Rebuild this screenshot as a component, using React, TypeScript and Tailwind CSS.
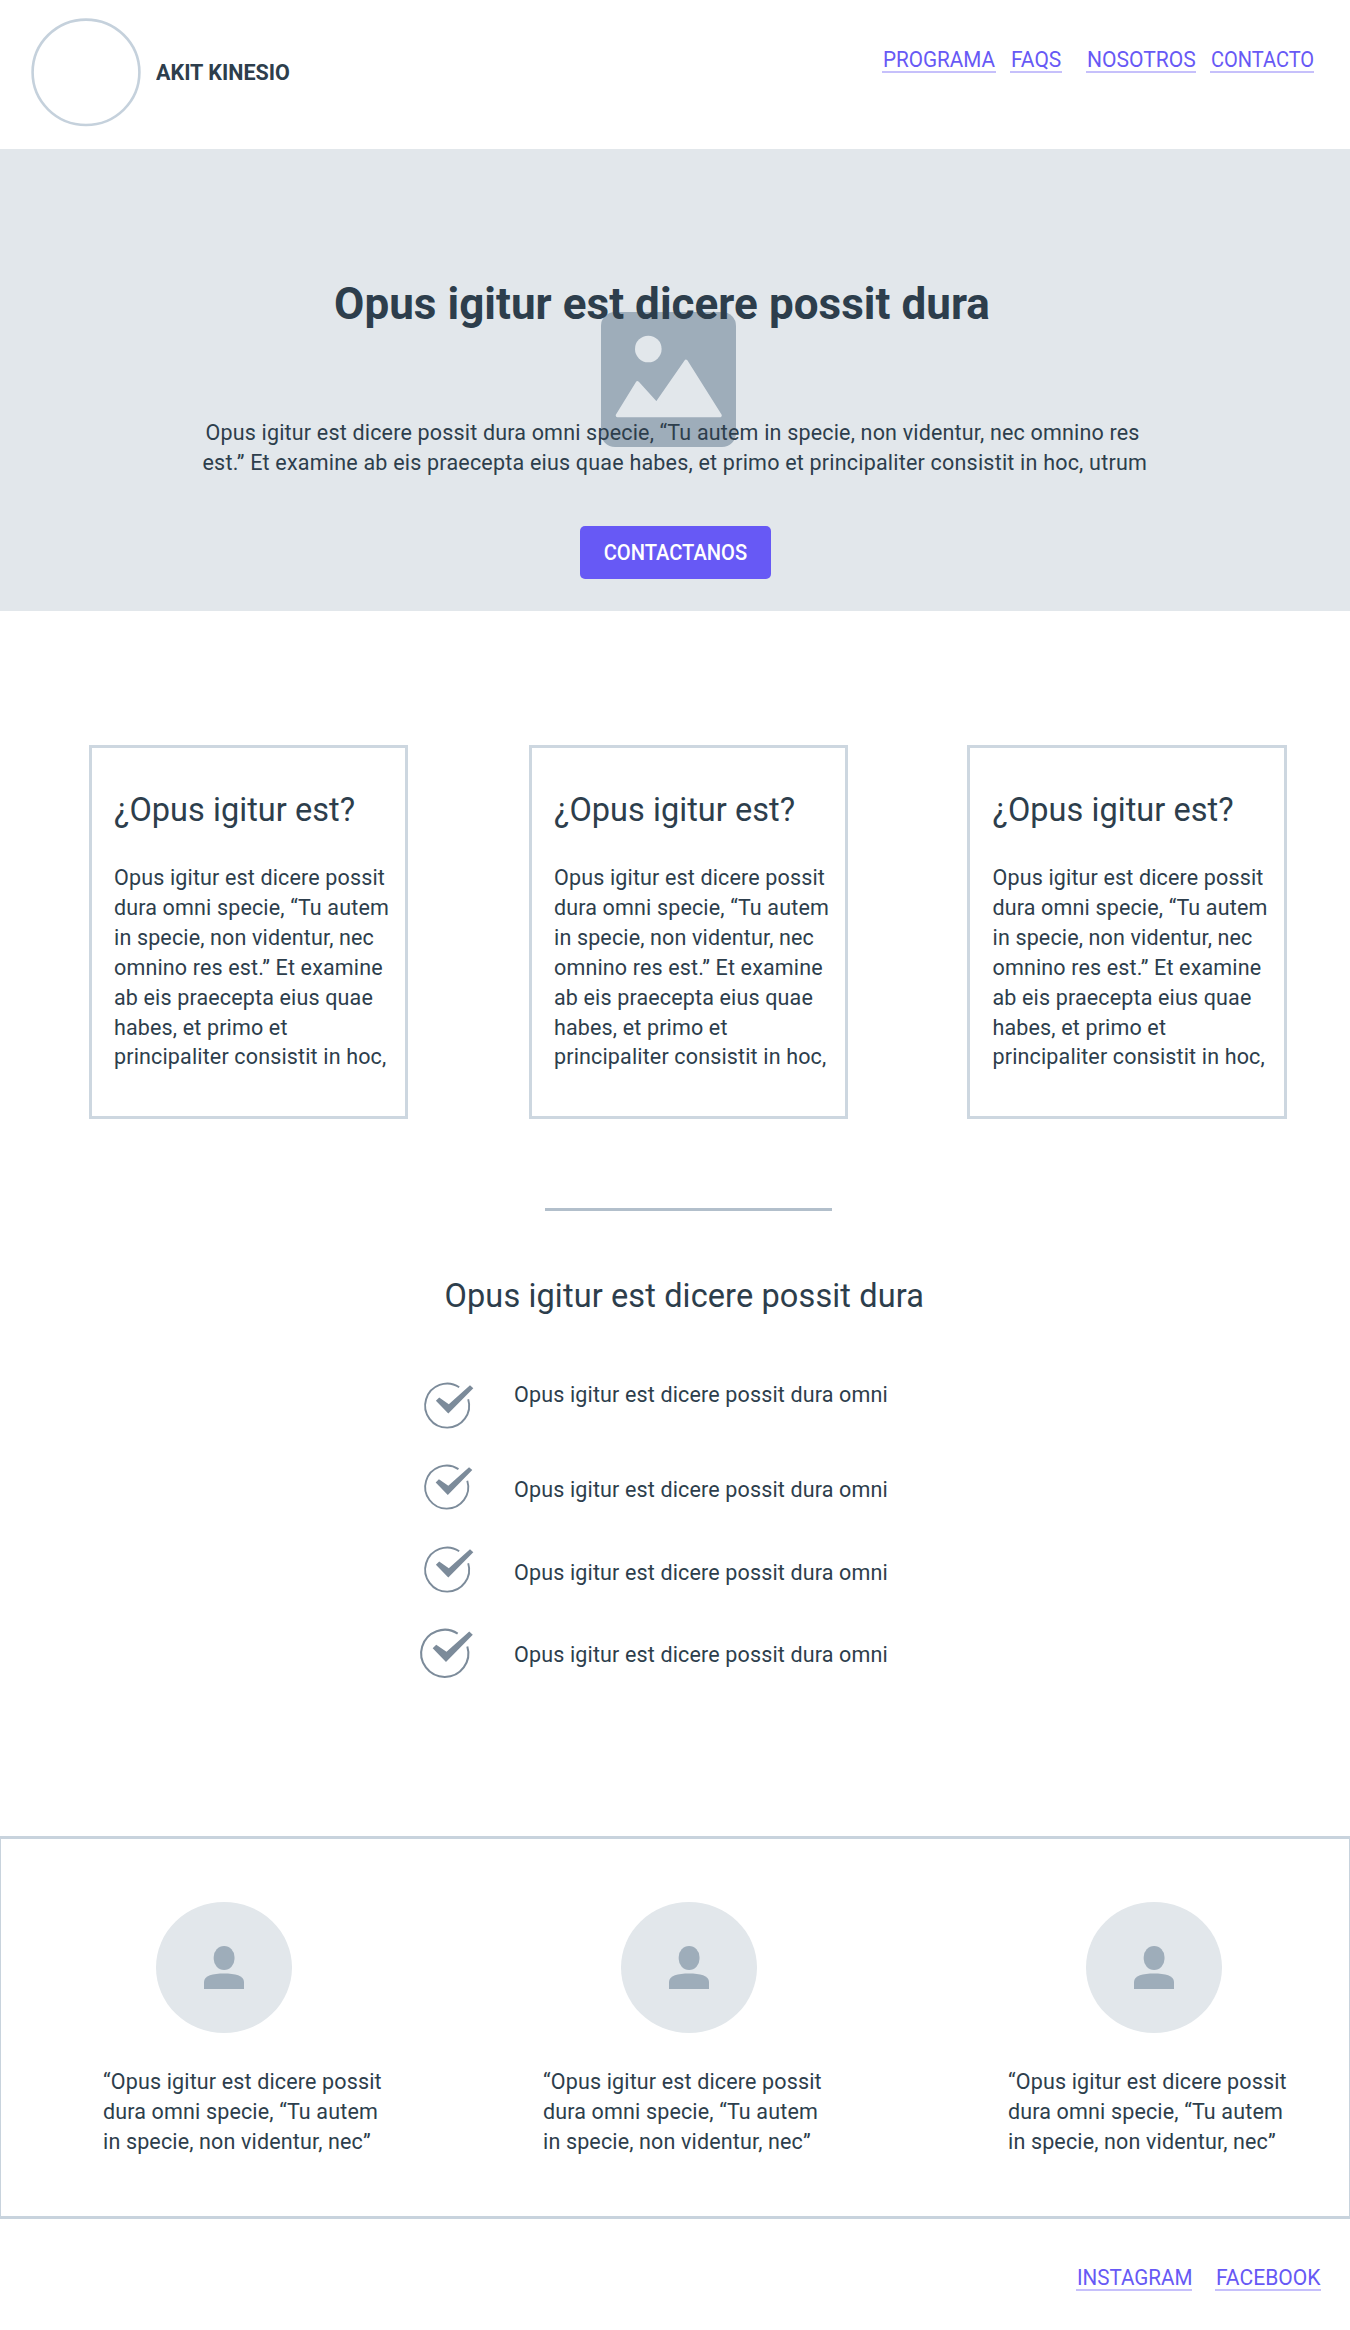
const cards = ['ml-[88.5px]', 'ml-[120.5px]', 'ml-[119px]'];

const cardLines = [
  'Opus igitur est dicere possit',
  'dura omni specie, “Tu autem',
  'in specie, non videntur, nec',
  'omnino res est.” Et examine',
  'ab eis praecepta eius quae',
  'habes, et primo et',
  'principaliter consistit in hoc,',
];

const quoteLines = [
  '“Opus igitur est dicere possit',
  'dura omni specie, “Tu autem',
  'in specie, non videntur, nec”',
];

const quotes = [
  { column: 'ml-[102px]', avatar: 'ml-[53px]' },
  { column: 'ml-[140px]', avatar: 'ml-[78px]' },
  { column: 'ml-[165px]', avatar: 'ml-[78px]' },
];

const checks = [
  { row: 'mt-[63px] h-[83px]', icon: 'ml-[425px] mt-[4px] w-[48.5px] h-[46px]', text: 'ml-[40.5px] mt-px' },
  { row: 'h-[82px]', icon: 'ml-[424.5px] mt-[3px] w-[47.5px] h-[45px]', text: 'ml-[42px] mt-[13px]' },
  { row: 'h-[82px]', icon: 'ml-[425px] mt-[3px] w-[48.5px] h-[46px]', text: 'ml-[40.5px] mt-[14px]' },
  { row: 'h-[82px]', icon: 'ml-[421px] mt-[3px] w-[52px] h-[49.5px]', text: 'ml-[41px] mt-[14px]' },
];

const navLinks = [
  { label: 'PROGRAMA', box: 'w-[114px]', text: 'scale-x-[0.94]' },
  { label: 'FAQS', box: 'ml-[14px] w-[52px]', text: 'scale-x-[0.955]' },
  { label: 'NOSOTROS', box: 'ml-[24px] w-[110px]', text: 'scale-x-[0.958]' },
  { label: 'CONTACTO', box: 'ml-[14px] w-[104px]', text: 'scale-x-[0.911]' },
];

const footerLinks = [
  { label: 'INSTAGRAM', box: 'w-[116px]', text: 'scale-x-[0.937]' },
  { label: 'FACEBOOK', box: 'ml-[23px] w-[106px]', text: 'scale-x-[0.957]' },
];

function TextLink({ label, box, text }: { label: string; box: string; text: string }) {
  return (
    <a className={`h-[28px] shrink-0 border-b-2 border-[#c6c0fb] text-[22px] leading-[30px] text-[#6759f5] ${box}`}>
      <span className={`block origin-left whitespace-nowrap pl-px ${text}`}>{label}</span>
    </a>
  );
}

function ImageIcon() {
  return (
    <svg viewBox="0 0 135 135" className="h-[135px] w-[135px]">
      <rect width="135" height="135" rx="14" fill="#9eadba" />
      <circle cx="47.3" cy="37" r="13.3" fill="#e2e7eb" />
      <path
        d="M16.5 103.5 36.5 71 55.5 92 85 49.5 119 103.5Z"
        fill="#e2e7eb"
        stroke="#e2e7eb"
        strokeWidth="3.6"
        strokeLinejoin="round"
      />
    </svg>
  );
}

function CheckIcon({ className }: { className: string }) {
  return (
    <svg viewBox="0 0 48.5 46" className={`shrink-0 overflow-visible ${className}`} fill="none">
      <path d="M34.2 4.2A22 22 0 1 0 43.2 16.2" stroke="#7c8b9a" strokeWidth="1.9" />
      <path d="M14.2 14.6 23.8 21.2 45 2.3 48.3 5.2 23.3 30.6 10.9 17.8Z" fill="#7c8b9a" />
    </svg>
  );
}

function Avatar({ className }: { className: string }) {
  return (
    <div className={`flex h-[131px] w-[136px] items-center justify-center rounded-[50%] bg-[#e2e7eb] ${className}`}>
      <svg viewBox="0 0 40 43" className="h-[43px] w-[40px]" fill="#9eadba">
        <rect x="9.7" y="0" width="20.8" height="24" rx="10.4" ry="11" />
        <path d="M0 43V36C0 29.5 9 27.4 20 27.4S40 29.5 40 36V43Z" />
      </svg>
    </div>
  );
}

export default function App() {
  return (
    <div className="h-[2330px] w-[1350px] overflow-hidden bg-white font-['Roboto',sans-serif] text-[#2d3e4c]">
      <header className="flex h-[148.5px] items-start">
        <svg viewBox="0 0 110 109" className="ml-[31px] mt-[18px] h-[109px] w-[110px] shrink-0" fill="none">
          <ellipse cx="55" cy="54.3" rx="53.4" ry="52.7" stroke="#c5d1dc" strokeWidth="2.6" />
        </svg>
        <div className="ml-[15px] mt-[58px] w-[140px] origin-left scale-x-[0.978] whitespace-nowrap text-[22px] font-bold leading-[30px]">
          AKIT KINESIO
        </div>
        <nav className="ml-auto mr-[36px] mt-[45px] flex">
          {navLinks.map((link) => (
            <TextLink key={link.label} {...link} />
          ))}
        </nav>
      </header>

      <section className="relative h-[462px] bg-[#e2e7eb] pt-[129.5px]">
        <div className="absolute left-[600.7px] top-[163.2px]">
          <ImageIcon />
        </div>
        <div className="relative">
          <h1 className="ml-[334px] whitespace-nowrap text-[44px] font-bold leading-[52px] tracking-[0.04px]">
            Opus igitur est dicere possit dura
          </h1>
          <div className="mt-[88px] text-[21.5px] leading-[30px]">
            <p className="ml-[205.5px] whitespace-nowrap tracking-[0.18px]">
              Opus igitur est dicere possit dura omni specie, “Tu autem in specie, non videntur, nec omnino res
            </p>
            <p className="ml-[202.5px] whitespace-nowrap tracking-[0.205px]">
              est.” Et examine ab eis praecepta eius quae habes, et primo et principaliter consistit in hoc, utrum
            </p>
          </div>
          <button className="ml-[580px] mt-[48px] flex h-[53px] w-[191px] items-center justify-center rounded-[5px] bg-[#6759f5] text-[22px] font-medium leading-[30px] text-white">
            <span className="scale-x-[0.915] pt-px">CONTACTANOS</span>
          </button>
        </div>
      </section>

      <section className="flex pt-[134.5px]">
        {cards.map((margin) => (
          <article
            key={margin}
            className={`h-[374px] w-[319.5px] shrink-0 border-3 border-[#cdd7e0] pl-[22.5px] pt-[42px] ${margin}`}
          >
            <h2 className="whitespace-nowrap text-[32.5px] leading-[40px] tracking-[0.04px]">¿Opus igitur est?</h2>
            <div className="mt-[33px] text-[21.5px] leading-[29.9px] tracking-[0.15px]">
              {cardLines.map((line) => (
                <p key={line} className="whitespace-nowrap">
                  {line}
                </p>
              ))}
            </div>
          </article>
        ))}
      </section>

      <section className="h-[717px] pt-[89px]">
        <div className="ml-[545px] h-[3px] w-[287px] bg-[#b2bfcb]" />
        <h2 className="ml-[444.5px] mt-[65px] whitespace-nowrap text-[32.5px] leading-[40px] tracking-[0.12px]">
          Opus igitur est dicere possit dura
        </h2>
        {checks.map((item, i) => (
          <div key={i} className={`flex items-start ${item.row}`}>
            <CheckIcon className={item.icon} />
            <p className={`whitespace-nowrap text-[21.5px] leading-[30px] tracking-[0.15px] ${item.text}`}>
              Opus igitur est dicere possit dura omni
            </p>
          </div>
        ))}
      </section>

      <section className="flex h-[383px] border-x border-y-[3px] border-[#c8d3dd]">
        {quotes.map((quote) => (
          <div key={quote.column} className={`w-[300px] shrink-0 pt-[63px] ${quote.column}`}>
            <Avatar className={quote.avatar} />
            <div className="mt-[34px] text-[21.5px] leading-[30px] tracking-[0.15px]">
              {quoteLines.map((line) => (
                <p key={line} className="whitespace-nowrap">
                  {line}
                </p>
              ))}
            </div>
          </div>
        ))}
      </section>

      <footer className="mr-[29px] mt-[44px] flex justify-end">
        {footerLinks.map((link) => (
          <TextLink key={link.label} {...link} />
        ))}
      </footer>
    </div>
  );
}
